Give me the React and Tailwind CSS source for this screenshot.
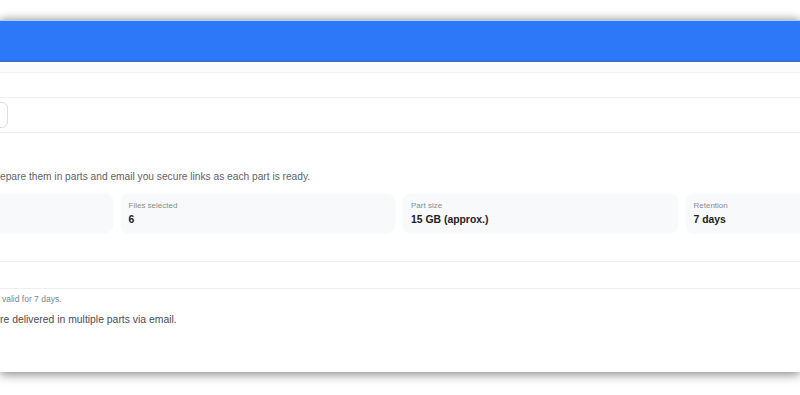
export default function App() {
  const stats = [
    ['', ''],
    ['Files selected', '6'],
    ['Part size', '15 GB (approx.)'],
    ['Retention', '7 days'],
  ]

  return (
    <main className="min-h-[395px] w-[800px] overflow-hidden bg-white pt-[20px] font-['Liberation_Sans',Arial,sans-serif]">
      <div className="h-[352px] w-full bg-white shadow-[0_-2px_8px_rgba(0,0,0,0.22),0_3px_10px_rgba(0,0,0,0.38)]">
        <div className="h-[42px] border-t border-t-[#a9d3f3] border-b-2 border-b-[#3b6fd2] bg-[#2c78f8]" />
        <div className="h-[11px] border-b border-[#f1eff0] bg-[#fdfcfc]" />
        <div className="h-[25px] border-b border-[#f0f0f0]" />
        <div className="h-[35px] border-b border-[#eeeeee] pt-[4px]">
          <div className="-ml-[40px] h-[26px] w-[48px] rounded-md border border-[#dedede] bg-white" />
        </div>
        <div className="h-[129px] border-b border-[#efefef] pt-[37px]">
          <p className="text-[10.2px] leading-[14px] text-[#5f6368]">
            epare them in parts and email you secure links as each part is ready.
          </p>
          <div className="-ml-[162px] mt-[10px] grid w-[1122px] grid-cols-4 gap-[8px]">
            {stats.map(([label, value], i) => (
              <div key={i} className="h-[39px] rounded-lg bg-[#f8f9fa] px-[8px] pt-[7px] shadow-[0_0_3px_rgba(0,0,0,0.03)]">
                <div className="text-[8px] leading-[10px] text-[#8a8d91]">{label}</div>
                <div className="mt-[2px] text-[10.4px] font-bold leading-[13px] text-[#222]">{value}</div>
              </div>
            ))}
          </div>
        </div>
        <div className="h-[27px] border-b border-[#eeeeee]" />
        <div className="pl-[2px] pt-[4px]">
          <p className="text-[8.5px] leading-[12px] text-[#80868b]">valid for 7 days.</p>
        </div>
        <p className="mt-[8px] text-[10.4px] leading-[14px] text-[#4a4d52]">
          re delivered in multiple parts via email.
        </p>
      </div>
    </main>
  )
}
